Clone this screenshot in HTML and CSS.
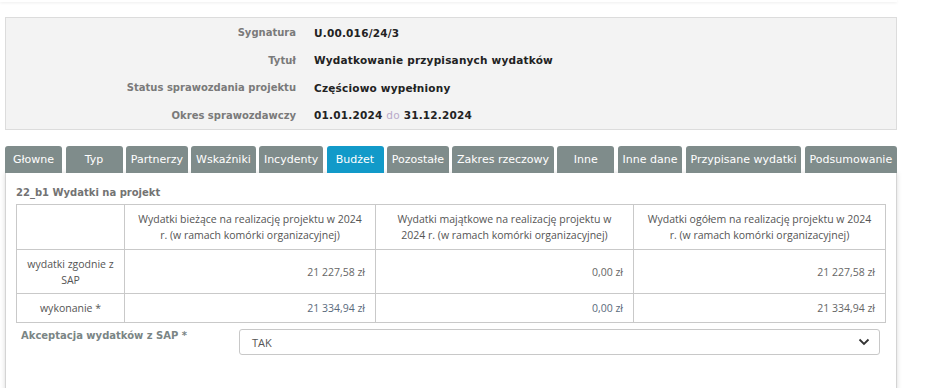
FILE: index.html
```html
<!DOCTYPE html>
<html>
<head>
   <meta http-equiv="Content-Type" content="text/html; charset=UTF-8" />
   <link rel="stylesheet" href="styles.css">
</head>
<body>

<div class="topbar"></div>

<div class="info">
    <div class="row"><div class="lbl">Sygnatura</div><div class="val">U.00.016/24/3</div></div>
    <div class="row"><div class="lbl">Tytuł</div><div class="val">Wydatkowanie przypisanych wydatków</div></div>
    <div class="row"><div class="lbl">Status sprawozdania projektu</div><div class="val">Częściowo wypełniony</div></div>
    <div class="row"><div class="lbl">Okres sprawozdawczy</div><div class="val">01.01.2024 <span class="do">do</span> 31.12.2024</div></div>
</div>

<div class="tabs">
    <div class="tab">Głowne</div>
    <div class="tab">Typ</div>
    <div class="tab">Partnerzy</div>
    <div class="tab">Wskaźniki</div>
    <div class="tab">Incydenty</div>
    <div class="tab active">Budżet</div>
    <div class="tab">Pozostałe</div>
    <div class="tab">Zakres rzeczowy</div>
    <div class="tab">Inne</div>
    <div class="tab">Inne dane</div>
    <div class="tab">Przypisane wydatki</div>
    <div class="tab">Podsumowanie</div>
</div>

<div class="panel">
    <h3>22_b1 Wydatki na projekt</h3>
    <table class="grid">
        <tr class="head">
            <td class="c0"></td>
            <td class="c1">Wydatki bieżące na realizację projektu w 2024 r. (w ramach komórki organizacyjnej)</td>
            <td class="c2">Wydatki majątkowe na realizację projektu w 2024 r. (w ramach komórki organizacyjnej)</td>
            <td class="c3">Wydatki ogółem na realizację projektu w 2024 r. (w ramach komórki organizacyjnej)</td>
        </tr>
        <tr class="sap">
            <td class="name">wydatki zgodnie z SAP</td>
            <td class="num">21 227,58 zł</td>
            <td class="num">0,00 zł</td>
            <td class="num">21 227,58 zł</td>
        </tr>
        <tr class="exec">
            <td class="name">wykonanie *</td>
            <td class="num edit">21 334,94 zł</td>
            <td class="num edit">0,00 zł</td>
            <td class="num">21 334,94 zł</td>
        </tr>
    </table>

    <div class="field">
        <label>Akceptacja wydatków z SAP *</label>
        <div class="select">
            <span>TAK</span>
            <svg width="12" height="8" viewBox="0 0 12 8"><path d="M1.5 1.5 L6 6 L10.5 1.5" fill="none" stroke="#333" stroke-width="1.8"/></svg>
        </div>
    </div>
</div>

</body>
</html>
```

FILE: styles.css
```css
* {
    padding: 0; margin: 0;
    box-sizing: border-box;
}
body {
    font-family: "DejaVu Sans", sans-serif;
    background: #fff;
    width: 925px;
    height: 388px;
    overflow: hidden;
}
div.topbar {
    height: 2px;
    width: 897px;
    box-shadow: 0 1px 3px rgba(0, 0, 0, 0.08);
}

div.info {
    margin: 15px 28px 0 5px;
    height: 113px;
    background-color: #f3f3f3;
    border: 1px solid #dcdcdc;
    padding-top: 1px;
}
div.row {
    display: flex;
    align-items: center;
    height: 27.5px;
}
div.lbl {
    width: 290px;
    text-align: right;
    font-size: 10px;
    font-weight: bold;
    color: #7a7a7a;
}
div.val {
    padding-left: 18px;
    font-size: 10.5px;
    font-weight: bold;
    color: #222;
    letter-spacing: 0.2px;
}
span.do {
    color: #b8a9c9;
    font-weight: normal;
}

div.tabs {
    display: flex;
    gap: 3.5px;
    margin: 16px 28px 0 5px;
    height: 27px;
}
div.tab {
    flex: 1 1 auto;
    min-width: 57px;
    background-color: #7f8c8b;
    color: #fff;
    font-size: 11px;
    text-align: center;
    line-height: 27px;
    border-radius: 3px 3px 0 0;
    padding: 0 3px;
    white-space: nowrap;
}
div.tab.active {
    background-color: #129ac9;
}

div.panel {
    margin: 0 28px 0 5px;
    height: 220px;
    background: #fff;
    border-left: 1px solid #d4d4d4;
    border-right: 1px solid #d4d4d4;
    box-shadow: 0 0 5px rgba(0, 0, 0, 0.15);
    padding: 14px 10px 0 10px;
}
h3 {
    font-size: 10px;
    color: #737373;
    font-weight: bold;
    margin-bottom: 6px;
}
table.grid {
    width: 870px;
    border-collapse: collapse;
    font-family: "Open Sans", sans-serif;
    font-size: 10.5px;
    color: #555;
}
table.grid td {
    border: 1px solid #c9c9c9;
    text-align: center;
    padding: 0 10px;
}
td.c0 { width: 108px; }
td.c1 { width: 251px; }
td.c2 { width: 258px; }
tr.head td { height: 45px; line-height: 16px; }
tr.sap td { height: 44px; line-height: 16px; }
tr.exec td { height: 29px; }
td.num {
    text-align: right !important;
    color: #666;
}
td.num.edit {
    color: #5a6a7c;
}

div.field {
    display: flex;
    margin-top: 6px;
    padding-left: 5px;
}
div.field label {
    width: 218px;
    font-size: 10px;
    font-weight: bold;
    color: #7a8585;
    padding-top: 1px;
}
div.select {
    width: 641px;
    height: 26px;
    border: 1px solid #c8c8c8;
    border-radius: 3px;
    display: flex;
    align-items: center;
    justify-content: space-between;
    padding: 0 9px 0 12px;
    font-family: "Open Sans", sans-serif;
    font-size: 11px;
    color: #555;
}
```
